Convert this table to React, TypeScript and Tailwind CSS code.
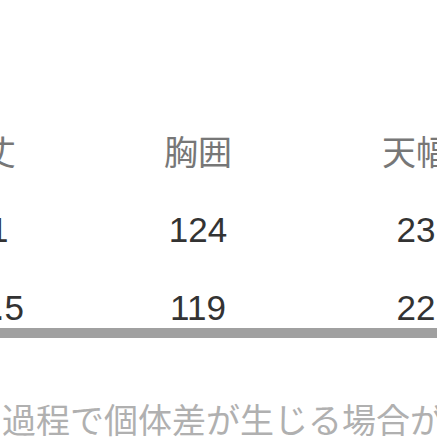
import React from "react";

const cjk = { fontFamily: '"Noto Sans CJK JP", "Noto Sans", sans-serif' };
const num = { fontFamily: '"Liberation Sans", Arial, "Noto Sans CJK JP", sans-serif' };

export default function App() {
  return (
    <div className="w-[437px] h-[437px] overflow-hidden bg-white relative">
      <div className="pt-[131px]">
        <div className="w-[648px] -ml-[126px] grid grid-cols-3 h-[40px] leading-[40px] text-[34px] text-[#777777]" style={cjk}>
          <div className="text-center whitespace-nowrap">着丈</div>
          <div className="text-center whitespace-nowrap">胸囲</div>
          <div className="text-center whitespace-nowrap pl-[4px]">天幅</div>
        </div>
        <div className="mt-[39px] w-[648px] -ml-[126px] grid grid-cols-3 h-[40px] leading-[40px] text-[35px] text-[#333333]" style={num}>
          <div className="text-center whitespace-nowrap pl-[14px]">71</div>
          <div className="text-center whitespace-nowrap">124</div>
          <div className="text-center whitespace-nowrap pl-[4px]">23</div>
        </div>
        <div className="mt-[38px] w-[648px] -ml-[126px] grid grid-cols-3 h-[40px] leading-[40px] text-[35px] text-[#333333]" style={num}>
          <div className="text-center whitespace-nowrap pl-[16px]">72.5</div>
          <div className="text-center whitespace-nowrap">119</div>
          <div className="text-center whitespace-nowrap pl-[4px]">22</div>
        </div>
        <div className="h-[10px] w-full bg-[#a0a0a0]" />
        <div className="mt-[61px] pl-[2px] h-[40px] leading-[40px] text-[34px] text-[#b0b0b0] whitespace-nowrap overflow-hidden" style={cjk}>
          過程で個体差が生じる場合があります
        </div>
      </div>
    </div>
  );
}
